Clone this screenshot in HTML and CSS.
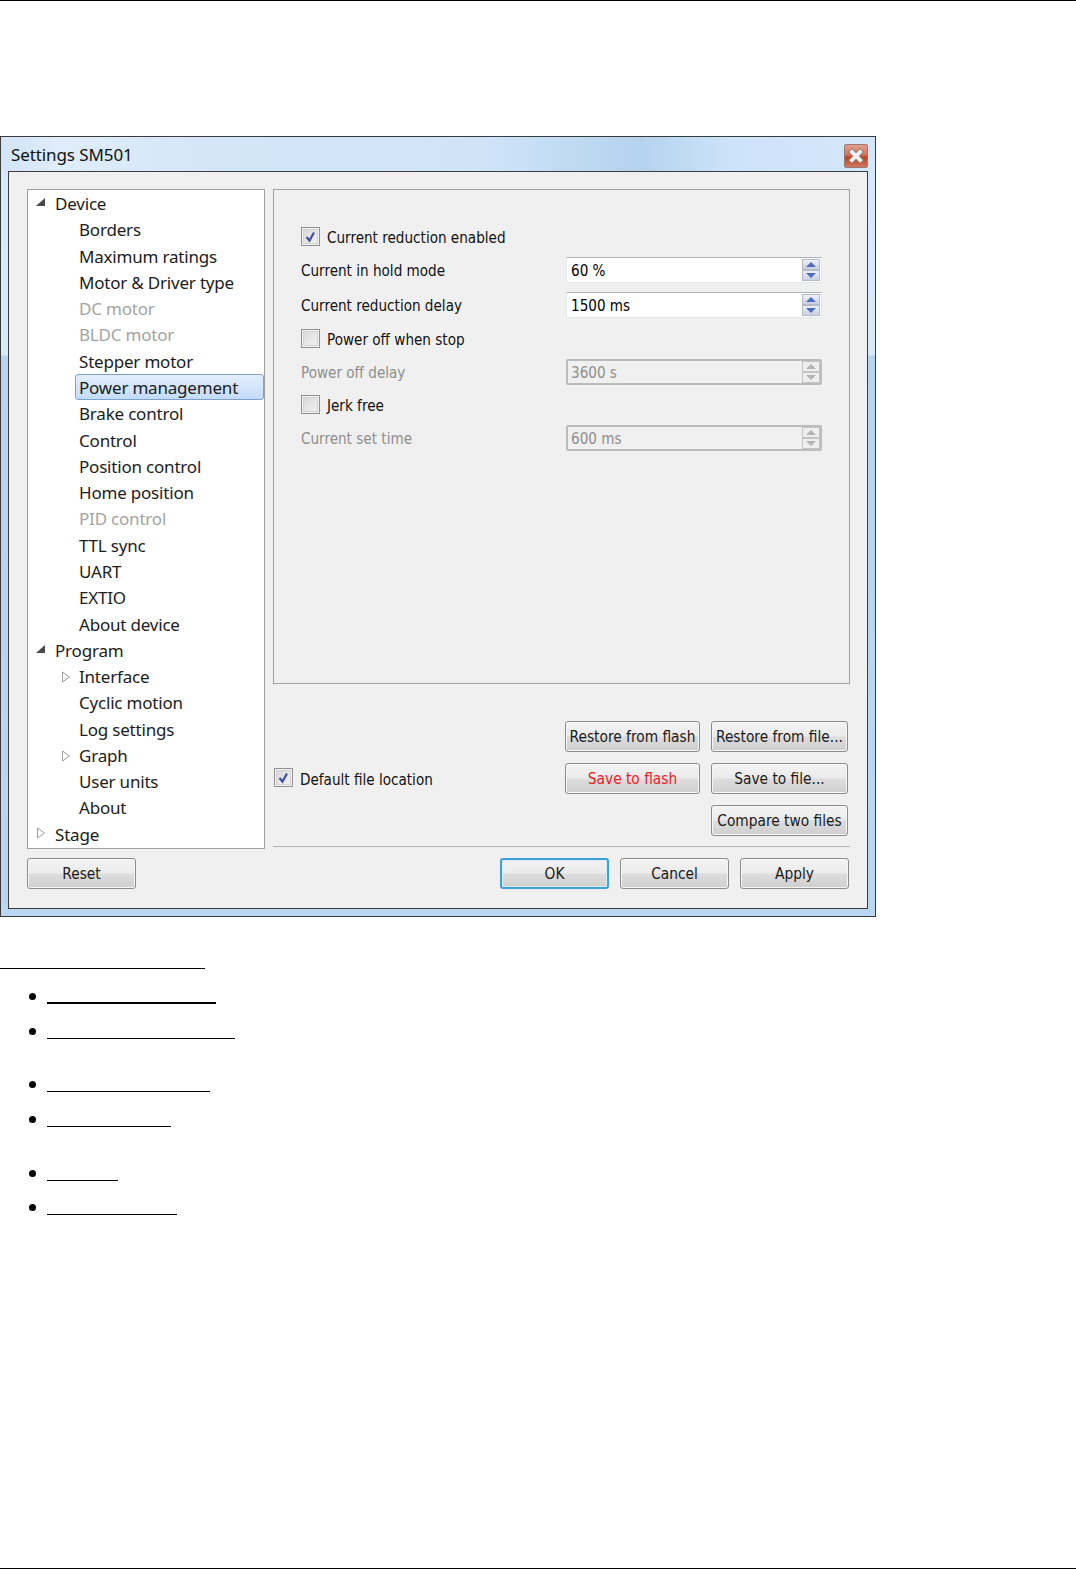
FILE: index.html
```html
<!DOCTYPE html>
<html lang="en">
<head>
<meta charset="utf-8">
<title>Settings SM501</title>
<link rel="stylesheet" href="styles.css">
</head>
<body>
<div class="page">
  <section class="window">
    <header class="titlebar">
      <span class="title">Settings SM501</span>
      <span class="close"><svg width="24" height="24" viewBox="0 0 24 24"><path class="x-edge" d="M7.500 7.500l9 9M16.500 7.500l-9 9"/><path class="x-core" d="M7.500 7.500l9 9M16.500 7.500l-9 9"/></svg></span>
    </header>
    <div class="client">
      <div class="main">
        <nav class="tree">
          <div class="node top"><svg class="arrow" width="12" height="12" viewBox="0 0 12 12"><path class="open" d="M10 2v8H1z"/></svg>Device</div>
          <div class="node">Borders</div>
          <div class="node">Maximum ratings</div>
          <div class="node">Motor &amp; Driver type</div>
          <div class="node off">DC motor</div>
          <div class="node off">BLDC motor</div>
          <div class="node">Stepper motor</div>
          <div class="node"><span class="selected">Power management</span></div>
          <div class="node">Brake control</div>
          <div class="node">Control</div>
          <div class="node">Position control</div>
          <div class="node">Home position</div>
          <div class="node off">PID control</div>
          <div class="node">TTL sync</div>
          <div class="node">UART</div>
          <div class="node">EXTIO</div>
          <div class="node">About device</div>
          <div class="node top"><svg class="arrow" width="12" height="12" viewBox="0 0 12 12"><path class="open" d="M10 2v8H1z"/></svg>Program</div>
          <div class="node"><svg class="arrow sub" width="12" height="12" viewBox="0 0 12 12"><path class="shut" d="M1.500 1v10l7-5z"/></svg>Interface</div>
          <div class="node">Cyclic motion</div>
          <div class="node">Log settings</div>
          <div class="node"><svg class="arrow sub" width="12" height="12" viewBox="0 0 12 12"><path class="shut" d="M1.500 1v10l7-5z"/></svg>Graph</div>
          <div class="node">User units</div>
          <div class="node">About</div>
          <div class="node top"><svg class="arrow" width="12" height="12" viewBox="0 0 12 12"><path class="shut" d="M2.500 1v10l7-5z"/></svg>Stage</div>
        </nav>
        <div class="side">
          <div class="panel">
            <div class="row"><label class="check"><span class="box"><svg width="17" height="17" viewBox="0 0 17 17"><path class="tick" d="M4.500 9l3 3.500 4.500-8"/></svg></span>Current reduction enabled</label></div>
            <div class="row"><span class="label">Current in hold mode</span><div class="spin"><span class="value">60 %</span><span class="steps"><i class="up"></i><i class="down"></i></span></div></div>
            <div class="row gap2"><span class="label">Current reduction delay</span><div class="spin"><span class="value">1500 ms</span><span class="steps"><i class="up"></i><i class="down"></i></span></div></div>
            <div class="row gap1"><label class="check"><span class="box"></span>Power off when stop</label></div>
            <div class="row"><span class="label muted">Power off delay</span><div class="spin disabled"><span class="value">3600 s</span><span class="steps"><i class="up"></i><i class="down"></i></span></div></div>
            <div class="row"><label class="check"><span class="box"></span>Jerk free</label></div>
            <div class="row"><span class="label muted">Current set time</span><div class="spin disabled"><span class="value">600 ms</span><span class="steps"><i class="up"></i><i class="down"></i></span></div></div>
          </div>
          <div class="files">
            <label class="check location"><span class="box"><svg width="17" height="17" viewBox="0 0 17 17"><path class="tick" d="M4.500 9l3 3.500 4.500-8"/></svg></span>Default file location</label>
            <button class="btn flash1">Restore from flash</button>
            <button class="btn file1">Restore from file...</button>
            <button class="btn flash2 danger">Save to flash</button>
            <button class="btn file2">Save to file...</button>
            <button class="btn file3">Compare two files</button>
          </div>
        </div>
      </div>
      <footer class="actions">
        <button class="btn wide">Reset</button>
        <span class="spacer"></span>
        <button class="btn wide default">OK</button>
        <button class="btn wide">Cancel</button>
        <button class="btn wide">Apply</button>
      </footer>
    </div>
  </section>
  <div class="links">
    <div class="heading"></div>
    <ul class="list">
      <li class="item"><span class="rule thick" style="width:169px"></span></li>
      <li class="item"><span class="rule" style="width:188px"></span></li>
      <li class="item group"><span class="rule" style="width:163px"></span></li>
      <li class="item"><span class="rule" style="width:124px"></span></li>
      <li class="item group"><span class="rule" style="width:71px"></span></li>
      <li class="item"><span class="rule" style="width:130px"></span></li>
    </ul>
  </div>
</div>
</body>
</html>
```

FILE: styles.css
```css
* { box-sizing: border-box; }
html, body { margin: 0; padding: 0; background: #fff; }
.page {
  height: 1569px;
  border-top: 1px solid #000;
  border-bottom: 1px solid #000;
  overflow: hidden;
  padding-top: 135px;
  font-family: "Liberation Sans", sans-serif;
  color: #000;
}
.window {
  width: 876px;
  height: 781px;
  border: 1px solid #3a3a3a;
  padding: 0 7px 7px 7px;
  background:
    linear-gradient(90deg, #d2e4f6 0, #e0edfa 60px, #d4e6f8 200px, #d0e4f8 480px, #b4d3ef 640px, #cde3f9 730px, #d5e7fa 876px) top left / 100% 34px no-repeat,
    linear-gradient(180deg, #d6e8fa 0, #d8e9fa 218px, #b6d4f2 219px, #b9d6f3 100%);
  display: flex;
  flex-direction: column;
}
.titlebar {
  height: 34px;
  flex: none;
  display: flex;
  align-items: center;
  justify-content: space-between;
  padding: 2px 0 0 3px;
}
.title { font: 17px "Noto Sans", sans-serif; letter-spacing: -0.100px; color: #111; margin-bottom: 2px; }
.close {
  width: 24px;
  height: 24px;
  margin-top: 1px;
  border: 1px solid #a0776c;
  border-radius: 2px;
  background: linear-gradient(180deg, #dea18e 0, #d4745c 45%, #c2401f 55%, #cf7760 100%);
  display: flex;
  align-items: center;
  justify-content: center;
}
.x-edge { fill: none; stroke: #8a7a78; stroke-width: 6; stroke-linecap: square; }
.x-core { fill: none; stroke: #f1f1f1; stroke-width: 4; stroke-linecap: square; }
.client {
  flex: 1;
  background: #f0f0f0;
  border: 1px solid #3c3c3c;
  padding: 17px 17px 18px 18px;
  display: flex;
  flex-direction: column;
}
.main { display: flex; gap: 8px; flex: none; height: 660px; }
.tree {
  width: 238px;
  flex: none;
  background: #fff;
  border: 1px solid #a0a0a0;
  font: 17px/27.400px "Noto Sans", sans-serif;
  letter-spacing: -0.200px;
  color: #1c1c1c;
}
.node { height: 26.290px; padding-left: 51px; position: relative; white-space: nowrap; }
.node.top { padding-left: 27px; }
.node.off { color: #a3a3a3; }
.arrow { position: absolute; left: 7px; top: 6px; }
.arrow.sub { left: 33px; top: 8px; }
.open { fill: #4a4a4a; }
.shut { fill: #fff; stroke: #9c9c9c; stroke-width: 1; }
.selected {
  display: block;
  position: absolute;
  left: 47px;
  top: 0;
  width: 189px;
  height: 26px;
  padding-left: 3px;
  line-height: 26px;
  border: 1px solid #7da2ce;
  border-radius: 3px;
  background: linear-gradient(180deg, #e3eefc 0, #c4dcfa 100%);
}
.side { flex: 1; display: flex; flex-direction: column; }
.panel {
  height: 495px;
  flex: none;
  border: 1px solid #a0a0a0;
  padding: 34px 27px 0 27px;
  display: flex;
  flex-direction: column;
  gap: 7px;
  font: 15.100px "DejaVu Sans Condensed", "Open Sans", sans-serif;
}
.row { height: 26px; flex: none; display: flex; align-items: center; justify-content: space-between; }
.gap2 { margin-top: 2px; }
.gap1 { margin-top: 1px; }
.label, .value { padding-top: 2px; }
.label { color: #111; }
.muted { color: #8e8e8e; }
.check { display: flex; align-items: center; gap: 7px; padding-top: 2px; color: #111; font: 15.100px "DejaVu Sans Condensed", "Open Sans", sans-serif; }
.box {
  width: 19px;
  height: 19px;
  flex: none;
  margin-bottom: 4px;
  border: 1px solid #8f9090;
  background: linear-gradient(135deg, #d6d6d6 0, #f4f4f4 100%);
  box-shadow: inset 0 0 0 1px #f4f4f4, inset 0 0 0 2px #d3d3d3;
  display: block;
}
.box svg { display: block; }
.tick { fill: none; stroke: #3f4f9f; stroke-width: 2.200; }
.spin {
  width: 256px;
  height: 26px;
  border: 1px solid #e3e9f1;
  border-top-color: #aeb3b9;
  border-radius: 1px;
  background: #fff;
  display: flex;
  align-items: center;
  justify-content: space-between;
  padding: 0 1px 0 4px;
}
.spin.disabled { background: #f0f0f0; border: 2px solid #bcbcbc; border-radius: 2px; padding: 0 0 0 3px; color: #8e8e8e; }
.steps { width: 18px; height: 22px; display: flex; flex-direction: column; }
.steps i {
  flex: 1;
  display: flex;
  align-items: center;
  justify-content: center;
  border: 1px solid #b6bac2;
  background: linear-gradient(180deg, #eef0f8, #c9cfe4);
}
.steps i::before { content: ""; border-left: 5px solid transparent; border-right: 5px solid transparent; }
.up::before { border-bottom: 5px solid #4f6dbb; }
.down::before { border-top: 5px solid #4f6dbb; }
.disabled .steps i { border-color: #c4c4c4; background: #eeeeee; }
.disabled .up::before { border-bottom-color: #b4b4b4; }
.disabled .down::before { border-top-color: #b4b4b4; }
.files {
  flex: 1;
  display: grid;
  grid-template-columns: 1fr 135px 137px;
  grid-template-rows: 31px 31px 31px;
  column-gap: 11px;
  row-gap: 11px;
  padding: 37px 2px 0 0;
  margin-bottom: 2px;
  border-bottom: 1px solid #b4b4b4;
}
.location { grid-column: 1; grid-row: 2; padding-left: 1px; }
.flash1 { grid-column: 2; grid-row: 1; }
.file1 { grid-column: 3; grid-row: 1; }
.flash2 { grid-column: 2; grid-row: 2; }
.file2 { grid-column: 3; grid-row: 2; }
.file3 { grid-column: 3; grid-row: 3; }
.btn {
  padding: 1px 0 0;
  height: 31px;
  border: 1px solid #8c8c8c;
  border-radius: 3px;
  box-shadow: inset 0 0 0 1px #f6f6f6;
  background: linear-gradient(180deg, #f3f3f3 0, #ebebeb 48%, #dddddd 52%, #cfcfcf 100%);
  font: 15.300px "DejaVu Sans Condensed", "Open Sans", sans-serif;
  color: #1a1a1a;
  white-space: nowrap;
}
.danger { color: #f01c24; }
.actions { display: flex; gap: 11px; margin-top: 9px; padding-right: 1px; }
.wide { width: 109px; flex: none; }
.spacer { flex: 1; }
.default { border: 2px solid #3f9fd6; box-shadow: inset 0 0 0 1px #d8eefa; }
.links { padding-top: 51px; }
.heading { width: 205px; height: 1px; background: #000; }
.list { list-style: none; margin: 0; padding: 24px 0 0 29px; display: flex; flex-direction: column; gap: 23.700px; }
.item { height: 11px; display: flex; justify-content: flex-start; gap: 11px; }
.item::before { content: ""; width: 7px; height: 7px; border-radius: 50%; background: #000; flex: none; }
.group { margin-top: 19px; }
.rule { height: 1px; background: #000; align-self: flex-end; }
.rule.thick { height: 2px; }
```
